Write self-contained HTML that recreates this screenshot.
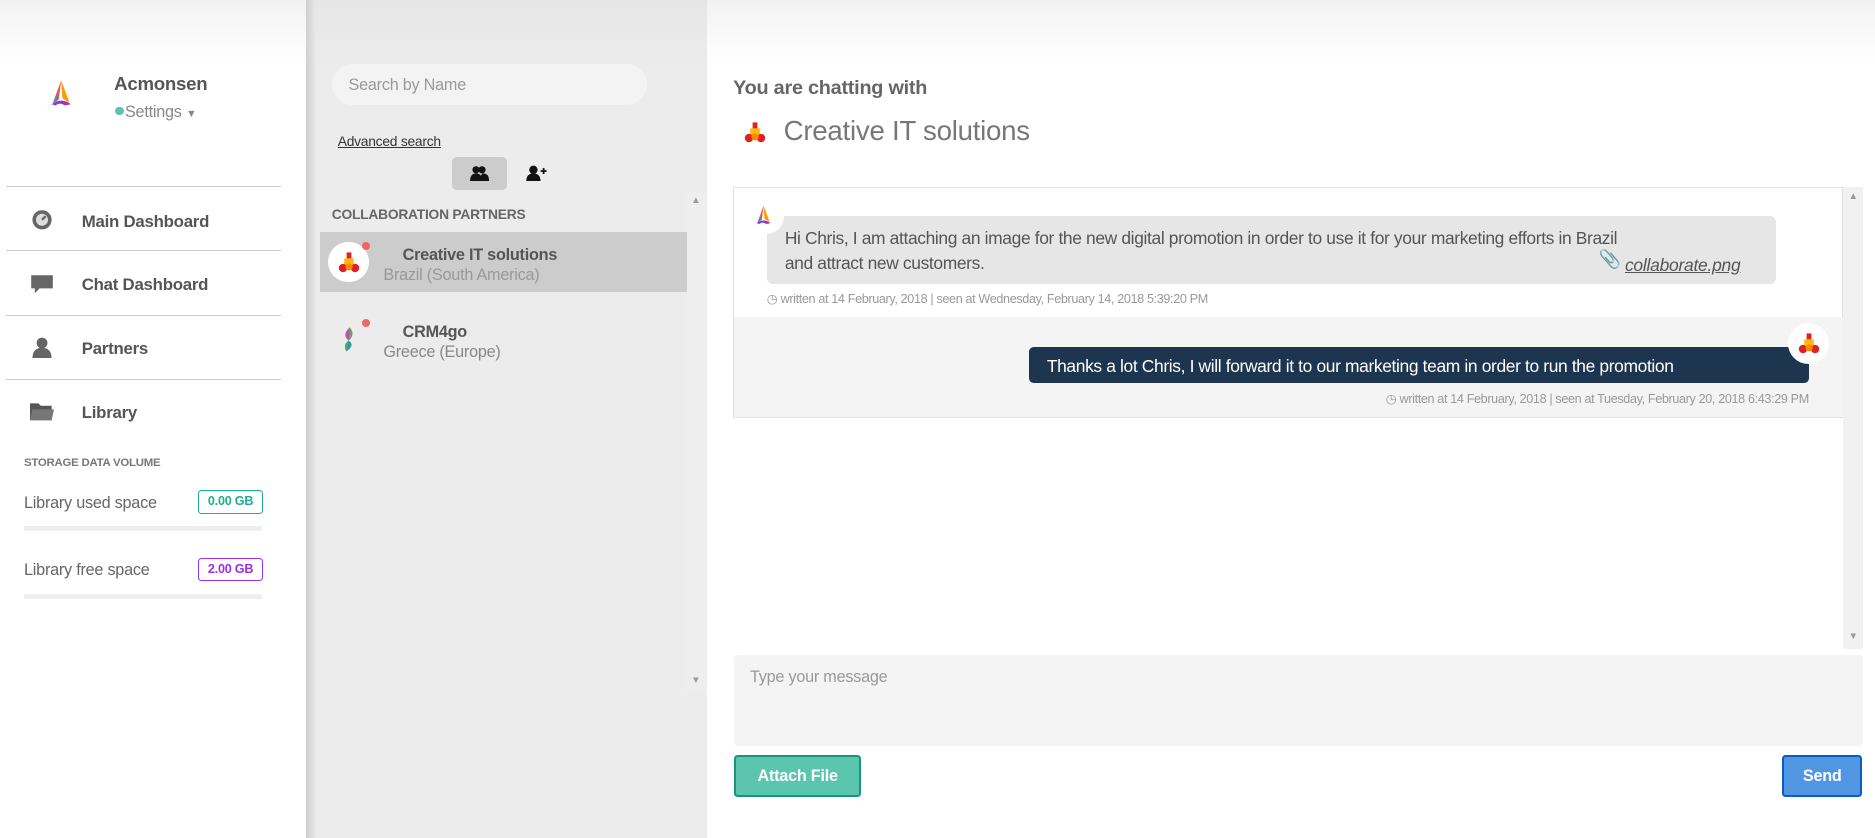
<!DOCTYPE html>
<html><head><meta charset="utf-8"><style>
html,body{margin:0;padding:0;overflow:hidden;background:#fff}
body{width:1875px;height:838px}
#w{position:relative;width:1560px;height:698px;zoom:1.2019;font-family:"Liberation Sans",sans-serif;color:#555;overflow:hidden;letter-spacing:-0.2px}
.a{position:absolute;white-space:nowrap}
.top{position:absolute;left:0;top:0;width:1560px;height:55px;background:linear-gradient(#f2f2f2,#fff)}
.line{position:absolute;left:5px;width:229px;height:1px;background:#ccc}
.menu{position:absolute;left:68px;font-size:14px;font-weight:bold;color:#555}
.ic{position:absolute;left:25px;width:20px;height:18px}
.badge{position:absolute;left:165px;width:52px;height:18px;border:1px solid;border-radius:3px;font-size:10.5px;font-weight:bold;text-align:center;line-height:18px}
.bar{position:absolute;left:20px;width:198px;height:4px;background:#eee}
</style></head><body><div id="w">
<div class="top"></div>
<div class="a" style="left:255px;top:0;width:7px;height:698px;background:linear-gradient(90deg,#cfcfcf,#e6e6e6)"></div>
<svg class="a" style="left:40px;top:66px" width="22" height="24" viewBox="0 0 22 24"><path d="M11 1 L4 20 L9 17 Z" fill="#e55"/><path d="M11 1 L18 20 L12 16 Z" fill="#f90"/><path d="M3 21 Q11 15 19 21 L14 22 Q10 19 6 22Z" fill="#93c"/><path d="M4 20 L9 12 L8 18Z" fill="#29c"/></svg>
<div class="a" style="left:95px;top:61px;font-size:15.5px;font-weight:bold;color:#555">Acmonsen</div>
<div class="a" style="left:96px;top:89px;width:7px;height:7px;border-radius:50%;background:#5bc4ad"></div>
<div class="a" style="left:104px;top:86px;font-size:13.5px;color:#888">Settings <span style="font-size:9px">▼</span></div>
<div class="line" style="top:155px"></div><div class="line" style="top:208px"></div><div class="line" style="top:262px"></div><div class="line" style="top:315px"></div>
<svg class="ic" style="top:174px" viewBox="0 0 20 18"><circle cx="10" cy="9" r="8" fill="#666"/><circle cx="10" cy="9" r="5" fill="#ddd"/><path d="M10 9 L13 6" stroke="#666" stroke-width="2"/></svg>
<div class="menu" style="top:176px">Main Dashboard</div>
<svg class="ic" style="top:228px" viewBox="0 0 20 18"><path d="M1 1 H19 V12 H8 L4 16 V12 H1Z" fill="#666"/></svg>
<div class="menu" style="top:229px">Chat Dashboard</div>
<svg class="ic" style="top:280px" viewBox="0 0 20 18"><circle cx="10" cy="5" r="4.5" fill="#666"/><path d="M2 18 Q2 9 10 9 Q18 9 18 18Z" fill="#666"/></svg>
<div class="menu" style="top:282px">Partners</div>
<svg class="ic" style="top:334px" viewBox="0 0 20 18"><path d="M0 2 H7 L9 4 H18 V16 H0Z" fill="#555"/><path d="M2 7 H20 L18 16 H0Z" fill="#777"/></svg>
<div class="menu" style="top:335px">Library</div>
<div class="a" style="left:20px;top:380px;font-size:9.5px;font-weight:bold;color:#777">STORAGE DATA VOLUME</div>
<div class="a" style="left:20px;top:411px;font-size:13.5px;color:#666">Library used space</div>
<div class="badge" style="top:408px;border-color:#1fae90;color:#1fae90">0.00 GB</div>
<div class="bar" style="top:438px"></div>
<div class="a" style="left:20px;top:467px;font-size:13.5px;color:#666">Library free space</div>
<div class="badge" style="top:464px;border-color:#9b30e0;color:#9b30e0">2.00 GB</div>
<div class="bar" style="top:494px"></div>
<div class="a" style="left:262px;top:0;width:326px;height:698px;background:linear-gradient(#e6e6e6,#ececec 60px)"></div>
<div class="a" style="left:276px;top:53px;width:262px;height:34px;border-radius:17px;background:#f3f3f3"></div>
<div class="a" style="left:290px;top:63px;font-size:13.5px;color:#999">Search by Name</div>
<div class="a" style="left:281px;top:111px;font-size:11.5px;color:#333;text-decoration:underline">Advanced search</div>
<div class="a" style="left:376px;top:131px;width:46px;height:27px;border-radius:4px;background:#ccc"></div>
<svg class="a" style="left:391px;top:137px" width="16" height="14" viewBox="0 0 16 14"><circle cx="5" cy="4" r="3" fill="#111"/><circle cx="10" cy="4" r="3" fill="#111"/><path d="M0 14 Q0 7 5 7 Q8 7 9 9 Q10 7 11 7 Q16 7 16 14Z" fill="#111"/></svg>
<svg class="a" style="left:437px;top:137px" width="18" height="14" viewBox="0 0 18 14"><circle cx="7" cy="4" r="3.5" fill="#111"/><path d="M1 14 Q1 7 7 7 Q13 7 13 14Z" fill="#111"/><path d="M13 5 H18 M15.5 2.5 V7.5" stroke="#111" stroke-width="1.5"/></svg>
<div class="a" style="left:572px;top:160px;width:16px;height:415px;background:#eee"></div>
<div class="a" style="left:575px;top:162px;font-size:8px;color:#999">▲</div>
<div class="a" style="left:575px;top:562px;font-size:8px;color:#999">▼</div>
<div class="a" style="left:276px;top:171px;font-size:11.5px;font-weight:bold;color:#666">COLLABORATION PARTNERS</div>
<div class="a" style="left:266px;top:193px;width:306px;height:50px;background:#ccc"></div>
<div class="a" style="left:273px;top:201px;width:34px;height:34px;border-radius:50%;background:#fff"></div>
<svg class="a" style="left:280px;top:208px" width="20" height="20" viewBox="0 0 20 20"><rect x="8" y="2" width="4" height="5" fill="#d22"/><rect x="6" y="7" width="8" height="5" fill="#fb0"/><circle cx="5" cy="15" r="3.5" fill="#d22"/><circle cx="15" cy="15" r="3.5" fill="#d22"/><circle cx="10" cy="14" r="3" fill="#f80"/></svg>
<div class="a" style="left:301px;top:201px;width:7px;height:7px;border-radius:50%;background:#e66"></div>
<div class="a" style="left:335px;top:205px;font-size:13.5px;font-weight:bold;color:#555">Creative IT solutions</div>
<div class="a" style="left:319px;top:221px;font-size:13.5px;color:#999">Brazil (South America)</div>
<svg class="a" style="left:282px;top:270px" width="16" height="24" viewBox="0 0 16 24"><path d="M9 2 Q2 8 8 13 Q3 16 6 22 Q14 17 8 13 Q14 8 9 2Z" fill="#6a4"/><path d="M9 2 Q3 8 8 13Z" fill="#c4c"/><path d="M8 13 Q13 17 6 22Z" fill="#29c"/></svg>
<div class="a" style="left:301px;top:265px;width:7px;height:7px;border-radius:50%;background:#e66"></div>
<div class="a" style="left:335px;top:269px;font-size:13.5px;font-weight:bold;color:#555">CRM4go</div>
<div class="a" style="left:319px;top:285px;font-size:13.5px;color:#888">Greece (Europe)</div>
<div class="a" style="left:610px;top:64px;font-size:16.5px;font-weight:bold;color:#666">You are chatting with</div>
<svg class="a" style="left:618px;top:100px" width="20" height="20" viewBox="0 0 20 20"><rect x="8" y="2" width="4" height="5" fill="#d22"/><rect x="6" y="7" width="8" height="5" fill="#fb0"/><circle cx="5" cy="15" r="3.5" fill="#d22"/><circle cx="15" cy="15" r="3.5" fill="#d22"/><circle cx="10" cy="14" r="3" fill="#f80"/></svg>
<div class="a" style="left:652px;top:96px;font-size:23px;color:#777">Creative IT solutions</div>
<div class="a" style="left:610px;top:156px;width:922px;height:190px;border:1px solid #e2e2e2;background:#fff"></div>
<div class="a" style="left:611px;top:264px;width:922px;height:83px;background:#f4f4f4"></div>
<div class="a" style="left:1533px;top:156px;width:17px;height:384px;background:#f1f1f1"></div>
<div class="a" style="left:1538px;top:159px;font-size:8px;color:#999">▲</div>
<div class="a" style="left:1538px;top:525px;font-size:8px;color:#999">▼</div>
<div class="a" style="left:638px;top:180px;width:840px;height:56px;border-radius:5px;background:#e6e6e6"></div>
<div class="a" style="left:622px;top:165px;width:30px;height:30px;border-radius:50%;background:#fff"></div>
<svg class="a" style="left:627px;top:168px" width="16" height="22" viewBox="0 0 22 24"><path d="M11 1 L4 20 L9 17 Z" fill="#e55"/><path d="M11 1 L18 20 L12 16 Z" fill="#f90"/><path d="M3 21 Q11 15 19 21 L14 22 Q10 19 6 22Z" fill="#93c"/><path d="M4 20 L9 12 L8 18Z" fill="#29c"/></svg>
<div class="a" style="left:653px;top:188px;font-size:14.5px;color:#555;line-height:21px;letter-spacing:-0.3px">Hi Chris, I am attaching an image for the new digital promotion in order to use it for your marketing efforts in Brazil<br>and attract new customers.</div>
<div class="a" style="left:1330px;top:207px;font-size:15px;color:#666">&#128206;</div>
<div class="a" style="left:1352px;top:212px;font-size:14.5px;color:#555;font-style:italic;text-decoration:underline">collaborate.png</div>
<div class="a" style="left:638px;top:242px;font-size:10.5px;color:#999;letter-spacing:-0.3px">&#9719; written at 14 February, 2018 | seen at Wednesday, February 14, 2018 5:39:20 PM</div>
<div class="a" style="left:856px;top:289px;width:649px;height:30px;border-radius:4px;background:#1e3550"></div>
<div class="a" style="left:871px;top:296px;font-size:14.5px;color:#fff;letter-spacing:-0.3px">Thanks a lot Chris, I will forward it to our marketing team in order to run the promotion</div>
<div class="a" style="left:1488px;top:269px;width:34px;height:34px;border-radius:50%;background:#fff"></div>
<svg class="a" style="left:1495px;top:275px" width="20" height="20" viewBox="0 0 20 20"><rect x="8" y="2" width="4" height="5" fill="#d22"/><rect x="6" y="7" width="8" height="5" fill="#fb0"/><circle cx="5" cy="15" r="3.5" fill="#d22"/><circle cx="15" cy="15" r="3.5" fill="#d22"/><circle cx="10" cy="14" r="3" fill="#f80"/></svg>
<div class="a" style="left:1095px;top:325px;width:410px;text-align:right;font-size:10.5px;color:#999;letter-spacing:-0.3px">&#9719; written at 14 February, 2018 | seen at Tuesday, February 20, 2018 6:43:29 PM</div>
<div class="a" style="left:611px;top:545px;width:939px;height:76px;border-radius:3px;background:#f4f4f4"></div>
<div class="a" style="left:624px;top:556px;font-size:13.5px;color:#999">Type your message</div>
<div class="a" style="left:611px;top:628px;width:102px;height:32px;border:2px solid #1a957a;border-radius:3px;background:#5cc5ad;color:#fff;font-size:13.5px;font-weight:bold;text-align:center;line-height:32px">Attach File</div>
<div class="a" style="left:1483px;top:628px;width:63px;height:32px;border:2px solid #0b5cc0;border-radius:3px;background:#5096e3;color:#fff;font-size:13.5px;font-weight:bold;text-align:center;line-height:32px">Send</div>
</div></body></html>
